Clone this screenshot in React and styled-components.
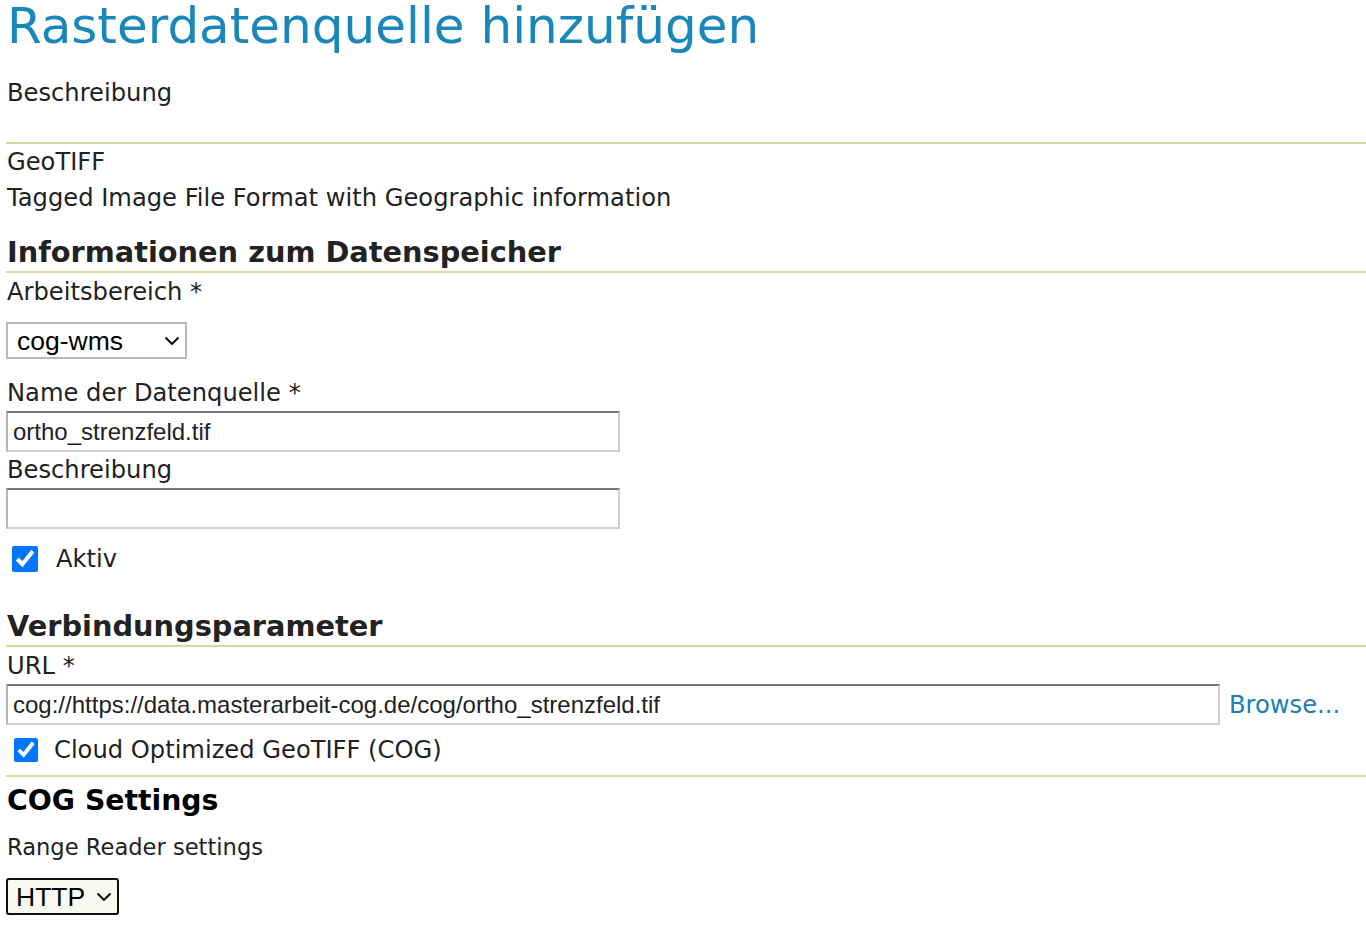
import styled, { createGlobalStyle } from 'styled-components'

const GlobalStyle = createGlobalStyle`
  body {
    margin: 0;
    background: #fff;
    font-family: "DejaVu Sans", Verdana, sans-serif;
    color: #222;
  }
`

const Page = styled.div`
  padding: 0 0 0 6px;
`

const Title = styled.h1`
  margin: 0;
  font-size: 50px;
  font-weight: normal;
  line-height: 52px;
  color: #1a87bb;
  padding-left: 1px;
  white-space: nowrap;
`

const Text = styled.p`
  margin: 0;
  font-size: ${(p) => p.$size || 24.2}px;
  line-height: 36px;
  padding-left: 1px;
`

const Rule = styled.hr`
  margin: 0;
  border: 0;
  border-top: 2px solid #d0dc9c;
`

const SectionTitle = styled.h2`
  margin: 0;
  font-size: ${(p) => p.$size}px;
  font-weight: bold;
  line-height: 34px;
  padding: 0 0 2px 1px;
  color: ${(p) => (p.$black ? '#000' : '#222')};
`

const SelectWrap = styled.div`
  position: relative;
  display: inline-block;
`

const Select = styled.select`
  appearance: none;
  font-family: "Liberation Sans", Arial, sans-serif;
  font-size: 26.5px;
  color: #000;
  width: 181px;
  height: 37px;
  padding: 0 0 0 9px;
  background: #fff;
  border: 2px solid #b8b8b8;
  border-radius: 0;
  outline: none;
`

const HttpSelect = styled(Select)`
  width: 113px;
  padding-left: 8px;
  background: #f9f9f1;
  border-color: #111;
  border-radius: 3px;
`

const Chevron = styled.svg`
  position: absolute;
  right: 7px;
  top: 14px;
  pointer-events: none;
`

const Input = styled.input`
  display: block;
  box-sizing: border-box;
  width: ${(p) => p.$width}px;
  height: 41px;
  font-family: "Liberation Sans", Arial, sans-serif;
  font-size: 24px;
  color: #222;
  padding: 0 5px;
  border: 2px solid #cfcfcf;
  border-top-color: #767676;
  border-left-color: #b5b5b5;
  outline: none;
`

const CheckRow = styled.label`
  display: flex;
  align-items: center;
  gap: ${(p) => p.$gap}px;
  font-size: 24.2px;
  padding-left: ${(p) => p.$indent}px;
`

const Check = styled.input`
  margin: 0;
  width: ${(p) => p.$box}px;
  height: ${(p) => p.$box}px;
  accent-color: #0075ff;
`

const UrlRow = styled.div`
  display: flex;
  align-items: center;
  gap: 9px;
`

const Browse = styled.a`
  font-size: 24.2px;
  color: #1a7fb4;
  text-decoration: none;
`

const Field = styled.div`
  display: flex;
  flex-direction: column;
  align-items: flex-start;
`

function ChevronIcon() {
  return (
    <Chevron width="16" height="10" viewBox="0 0 16 10">
      <path d="M1.5 1.5 L8 8 L14.5 1.5" fill="none" stroke="#000" strokeWidth="1.8" />
    </Chevron>
  )
}

export default function App() {
  return (
    <Page>
      <GlobalStyle />
      <Title>Rasterdatenquelle hinzufügen</Title>
      <Text style={{ marginTop: 23 }}>Beschreibung</Text>
      <Rule style={{ marginTop: 31 }} />
      <Text>GeoTIFF</Text>
      <Text>Tagged Image File Format with Geographic information</Text>

      <SectionTitle $size={28.8} style={{ marginTop: 19 }}>Informationen zum Datenspeicher</SectionTitle>
      <Rule />
      <Text style={{ marginTop: 1 }}>Arbeitsbereich *</Text>
      <SelectWrap style={{ marginTop: 12 }}>
        <Select defaultValue="cog-wms">
          <option>cog-wms</option>
        </Select>
        <ChevronIcon />
      </SelectWrap>

      <Field style={{ marginTop: 16 }}>
        <Text>Name der Datenquelle *</Text>
        <Input $width={614} defaultValue="ortho_strenzfeld.tif" />
        <Text>Beschreibung</Text>
        <Input $width={614} defaultValue="" />
      </Field>
      <CheckRow $gap={18} $indent={6} style={{ marginTop: 16 }}>
        <Check $box={26} type="checkbox" defaultChecked />
        Aktiv
      </CheckRow>

      <SectionTitle $size={28.8} style={{ marginTop: 36 }}>Verbindungsparameter</SectionTitle>
      <Rule />
      <Text style={{ marginTop: 1 }}>URL *</Text>
      <UrlRow>
        <Input $width={1214} defaultValue="cog://https://data.masterarbeit-cog.de/cog/ortho_strenzfeld.tif" />
        <Browse href="#">Browse...</Browse>
      </UrlRow>
      <CheckRow $gap={16} $indent={8} style={{ marginTop: 11, marginBottom: 11 }}>
        <Check $box={24} type="checkbox" defaultChecked />
        Cloud Optimized GeoTIFF (COG)
      </CheckRow>
      <Rule />

      <SectionTitle $size={28.3} $black style={{ marginTop: 7 }}>COG Settings</SectionTitle>
      <Text $size={22.6} style={{ marginTop: 9 }}>Range Reader settings</Text>
      <SelectWrap style={{ marginTop: 13 }}>
        <HttpSelect defaultValue="HTTP">
          <option>HTTP</option>
        </HttpSelect>
        <ChevronIcon />
      </SelectWrap>
    </Page>
  )
}
